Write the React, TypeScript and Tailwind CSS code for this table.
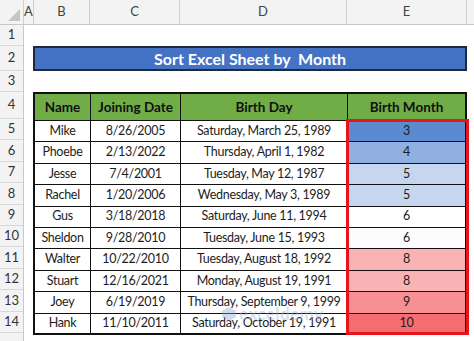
const cols = ["A", "B", "C", "D", "E"];
const colW = ["w-[10px]", "w-[56px]", "w-[90px]", "w-[167px]", "w-[120px]"];

const rows = [
  { name: "Mike", join: "8/26/2005", birth: "Saturday, March 25, 1989", month: 3, bg: "bg-[#5a8ad0]" },
  { name: "Phoebe", join: "2/13/2022", birth: "Thursday, April 1, 1982", month: 4, bg: "bg-[#8fb0e0]" },
  { name: "Jesse", join: "7/4/2001", birth: "Tuesday, May 12, 1987", month: 5, bg: "bg-[#c6d6ef]" },
  { name: "Rachel", join: "1/20/2006", birth: "Wednesday, May 3, 1989", month: 5, bg: "bg-[#c6d6ef]" },
  { name: "Gus", join: "3/18/2018", birth: "Saturday, June 11, 1994", month: 6, bg: "bg-white" },
  { name: "Sheldon", join: "9/28/2010", birth: "Tuesday, June 15, 1993", month: 6, bg: "bg-[#fcfcfe]" },
  { name: "Walter", join: "10/22/2010", birth: "Tuesday, August 18, 1992", month: 8, bg: "bg-[#f9b3b5]" },
  { name: "Stuart", join: "12/16/2021", birth: "Monday, August 19, 1991", month: 8, bg: "bg-[#f9b3b5]" },
  { name: "Joey", join: "6/19/2019", birth: "Thursday, September 9, 1999", month: 9, bg: "bg-[#f79092]" },
  { name: "Hank", join: "11/10/2011", birth: "Saturday, October 19, 1991", month: 10, bg: "bg-[#f46e71]" },
];

function RowNum({ n, h }: { n?: number; h: string }) {
  return (
    <div className={`${h} flex items-center justify-center border-b border-[#d8d8d8] text-[13px] text-[#333]`}>
      {n}
    </div>
  );
}

export default function App() {
  const rowH = ["h-[21px]", "h-[25px]", "h-[21px]", "h-[27px]"];
  return (
    <div
      className="relative h-[341px] w-[474px] overflow-hidden bg-white text-[#1d1d1d]"
      style={{ fontFamily: "Lato, 'Open Sans', sans-serif" }}
    >
      {/* column letters */}
      <div className="flex h-[25px] border-b border-[#c8c8c8] bg-[#f3f3f3] text-[13px] text-[#444]">
        <div className="flex w-[24px] items-end justify-end border-r border-[#d0d0d0] p-[3px]">
          <svg width="12" height="12" viewBox="0 0 12 12">
            <polygon points="12,0 12,12 0,12" fill="#c6c6c6" />
          </svg>
        </div>
        {cols.map((c, i) => (
          <div key={c} className={`${colW[i]} flex items-center justify-center border-r border-[#d0d0d0]`}>
            {c}
          </div>
        ))}
        <div className="flex-1" />
      </div>

      <div className="flex">
        {/* row numbers */}
        <div className="w-[24px] border-r border-[#c8c8c8] bg-[#f3f3f3]">
          {rowH.map((h, i) => (
            <RowNum key={i} n={i + 1} h={h} />
          ))}
          {rows.map((_, i) => (
            <RowNum key={i} n={i + 5} h="h-[21.4px]" />
          ))}
          <RowNum h="h-[10px]" />
        </div>

        {/* sheet */}
        <div className="flex-1 pl-[9px]">
          <div className="h-[21px]" />
          <div className="flex h-[25px] w-[434px] items-center justify-center border-2 border-[#1f2a3a] bg-[#4472c4] text-[16px] font-bold text-white">
            Sort Excel Sheet by&nbsp; Month
          </div>
          <div className="h-[21px]" />

          <div className="relative w-[434px] whitespace-nowrap border-l-2 border-t-2 border-[#111] text-[12.5px] tracking-[-0.3px]">
            <div className="flex h-[27px] bg-[#70ad47] text-[13.5px] font-bold tracking-normal text-[#111]">
              <div className="flex w-[56px] items-center justify-center border-b border-r border-[#111]">Name</div>
              <div className="flex w-[90px] items-center justify-center border-b border-r border-[#111]">Joining Date</div>
              <div className="flex w-[167px] items-center justify-center border-b border-r border-[#111]">Birth Day</div>
              <div className="flex w-[119px] items-center justify-center border-b border-r-2 border-[#111]">Birth Month</div>
            </div>
            {rows.map((r, i) => (
              <div key={r.name} className="flex h-[21.4px]">
                <div className={`flex w-[56px] items-center justify-center border-r border-[#111] ${i === rows.length - 1 ? "border-b-2" : "border-b"}`}>
                  {r.name}
                </div>
                <div className={`flex w-[90px] items-center justify-center border-r border-[#111] ${i === rows.length - 1 ? "border-b-2" : "border-b"}`}>
                  {r.join}
                </div>
                <div className={`flex w-[167px] items-center justify-center border-r border-[#111] ${i === rows.length - 1 ? "border-b-2" : "border-b"}`}>
                  {r.birth}
                </div>
                <div className={`flex w-[119px] items-center justify-center border-b border-r-2 border-[#111] ${r.bg}`}>
                  {r.month}
                </div>
              </div>
            ))}

            {/* highlight box */}
            <div className="absolute left-[311px] top-[25px] h-[216px] w-[123px] border-[3px] border-[#e8141b]" />

            {/* watermark */}
            <div className="absolute left-[186px] top-[207px] flex items-center gap-[2px] text-[17px] font-bold tracking-wide text-[#9bb4d8] opacity-40">
              <svg width="16" height="16" viewBox="0 0 16 16">
                <path d="M8 1 L15 5 L15 11 L8 15 L1 11 L1 5 Z" fill="#8aa6cf" />
              </svg>
              exceldemy
            </div>
          </div>
        </div>
      </div>
    </div>
  );
}
